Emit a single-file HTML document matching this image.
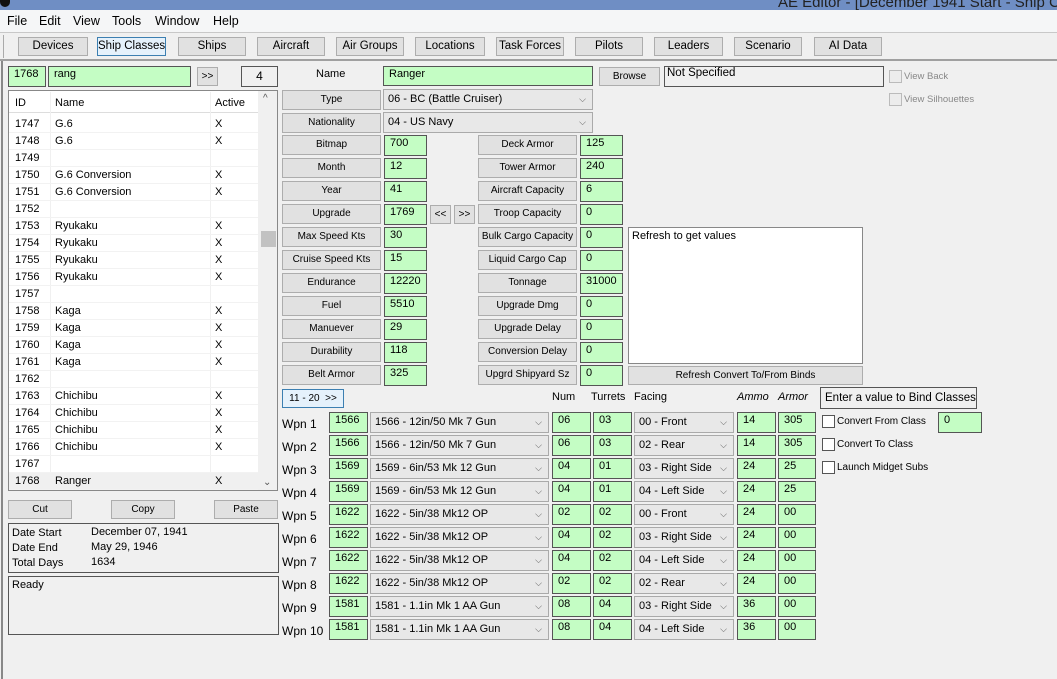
<!DOCTYPE html>
<html><head><meta charset="utf-8"><style>
*{box-sizing:border-box;margin:0;padding:0}
body{width:1057px;height:679px;overflow:hidden;background:#f0f0f0;font-family:"Liberation Sans",sans-serif;font-size:11px;color:#000;position:relative}
div{position:absolute;white-space:nowrap}
.b{background:#e1e1e1;border:1px solid #adadad;text-align:center;font-size:10px;line-height:18px;height:20px}
.tb{background:#e1e1e1;border:1px solid #adadad;text-align:center;font-size:11.5px;line-height:17px;height:19px;top:37px}
.g{background:#c4fdc4;border:1px solid #555;padding-left:5px;font-size:11px;line-height:14px;height:21px}
.s{background:#e8e8e8;border:1px solid #aaa;padding-left:4px;font-size:11px;line-height:19px;height:21px}
.s:after{content:"\2335";position:absolute;right:6px;top:0;font-size:9px;color:#555}
.r{height:17px;left:9px;width:249px;border-bottom:1px solid #f2f2f2;font-size:11px;line-height:17px}
.r span{position:absolute}
.w{left:282px;font-size:12px}
.cb{width:13px;height:13px;border:1px solid #555;background:#fff}
</style></head><body>
<div style="left:0;top:0;width:1057px;height:10px;background:#6f8ec4"></div>
<div style="left:0;top:0;width:10px;height:7px;background:#111;border-radius:0 0 6px 6px"></div>
<div style="left:778px;top:-6px;font-size:15px;color:#222">AE Editor - [December 1941 Start - Ship C</div>
<div style="left:0;top:10px;width:1057px;height:22px;background:#f5f6f7"></div>
<div style="left:7px;top:14px;font-size:12.5px">File</div>
<div style="left:39px;top:14px;font-size:12.5px">Edit</div>
<div style="left:73px;top:14px;font-size:12.5px">View</div>
<div style="left:112px;top:14px;font-size:12.5px">Tools</div>
<div style="left:155px;top:14px;font-size:12.5px">Window</div>
<div style="left:213px;top:14px;font-size:12.5px">Help</div>
<div style="left:0;top:32px;width:1057px;height:1px;background:#c8c8c8"></div>
<div style="left:3px;top:35px;width:1px;height:23px;background:#aaa"></div>
<div style="left:0;top:59px;width:1057px;height:2px;background:#a0a0a0"></div>
<div class="tb" style="left:18px;width:70px">Devices</div>
<div class="tb" style="left:97px;width:69px;border-color:#3c7fb1;background:#e5f1fb">Ship Classes</div>
<div class="tb" style="left:178px;width:68px">Ships</div>
<div class="tb" style="left:257px;width:68px">Aircraft</div>
<div class="tb" style="left:336px;width:68px">Air Groups</div>
<div class="tb" style="left:415px;width:70px">Locations</div>
<div class="tb" style="left:496px;width:68px">Task Forces</div>
<div class="tb" style="left:575px;width:68px">Pilots</div>
<div class="tb" style="left:654px;width:69px">Leaders</div>
<div class="tb" style="left:734px;width:68px">Scenario</div>
<div class="tb" style="left:814px;width:68px">AI Data</div>

<div style="left:1px;top:61px;width:2px;height:618px;background:#888"></div>
<div class="g" style="left:8px;top:66px;width:38px">1768</div>
<div class="g" style="left:48px;top:66px;width:143px">rang</div>
<div class="b" style="left:197px;top:67px;width:21px;height:19px">&gt;&gt;</div>
<div style="left:241px;top:66px;width:37px;height:21px;border:1px solid #555;text-align:center;line-height:19px;font-size:12px">4</div>
<div style="left:8px;top:90px;width:270px;height:401px;border:1px solid #888;background:#fff"></div>
<div style="left:9px;top:91px;width:249px;height:22px;background:#fff;border-bottom:1px solid #ddd"></div>
<div style="left:15px;top:97px;font-size:11px">ID</div>
<div style="left:55px;top:97px;font-size:11px">Name</div>
<div style="left:215px;top:97px;font-size:11px">Active</div>
<div style="left:50px;top:92px;width:1px;height:398px;background:#f0f0f0"></div>
<div style="left:210px;top:92px;width:1px;height:398px;background:#f0f0f0"></div>
<div style="left:258px;top:91px;width:19px;height:399px;background:#f0f0f0"></div>
<div style="left:263px;top:93px;font-size:10px;color:#555">&#94;</div>
<div style="left:263px;top:477px;font-size:10px;color:#555">&#8964;</div>
<div style="left:261px;top:231px;width:15px;height:16px;background:#c2c2c2"></div>
<div class="r" style="top:116px"><span style="left:6px">1747</span><span style="left:46px">G.6</span><span style="left:206px">X</span></div>
<div class="r" style="top:133px"><span style="left:6px">1748</span><span style="left:46px">G.6</span><span style="left:206px">X</span></div>
<div class="r" style="top:150px"><span style="left:6px">1749</span></div>
<div class="r" style="top:167px"><span style="left:6px">1750</span><span style="left:46px">G.6 Conversion</span><span style="left:206px">X</span></div>
<div class="r" style="top:184px"><span style="left:6px">1751</span><span style="left:46px">G.6 Conversion</span><span style="left:206px">X</span></div>
<div class="r" style="top:201px"><span style="left:6px">1752</span></div>
<div class="r" style="top:218px"><span style="left:6px">1753</span><span style="left:46px">Ryukaku</span><span style="left:206px">X</span></div>
<div class="r" style="top:235px"><span style="left:6px">1754</span><span style="left:46px">Ryukaku</span><span style="left:206px">X</span></div>
<div class="r" style="top:252px"><span style="left:6px">1755</span><span style="left:46px">Ryukaku</span><span style="left:206px">X</span></div>
<div class="r" style="top:269px"><span style="left:6px">1756</span><span style="left:46px">Ryukaku</span><span style="left:206px">X</span></div>
<div class="r" style="top:286px"><span style="left:6px">1757</span></div>
<div class="r" style="top:303px"><span style="left:6px">1758</span><span style="left:46px">Kaga</span><span style="left:206px">X</span></div>
<div class="r" style="top:320px"><span style="left:6px">1759</span><span style="left:46px">Kaga</span><span style="left:206px">X</span></div>
<div class="r" style="top:337px"><span style="left:6px">1760</span><span style="left:46px">Kaga</span><span style="left:206px">X</span></div>
<div class="r" style="top:354px"><span style="left:6px">1761</span><span style="left:46px">Kaga</span><span style="left:206px">X</span></div>
<div class="r" style="top:371px"><span style="left:6px">1762</span></div>
<div class="r" style="top:388px"><span style="left:6px">1763</span><span style="left:46px">Chichibu</span><span style="left:206px">X</span></div>
<div class="r" style="top:405px"><span style="left:6px">1764</span><span style="left:46px">Chichibu</span><span style="left:206px">X</span></div>
<div class="r" style="top:422px"><span style="left:6px">1765</span><span style="left:46px">Chichibu</span><span style="left:206px">X</span></div>
<div class="r" style="top:439px"><span style="left:6px">1766</span><span style="left:46px">Chichibu</span><span style="left:206px">X</span></div>
<div class="r" style="top:456px"><span style="left:6px">1767</span></div>
<div class="r" style="top:473px;background:#f0f0f0"><span style="left:6px">1768</span><span style="left:46px">Ranger</span><span style="left:206px">X</span></div>
<div class="b" style="left:8px;top:500px;width:64px;height:19px;line-height:17px">Cut</div>
<div class="b" style="left:111px;top:500px;width:64px;height:19px;line-height:17px">Copy</div>
<div class="b" style="left:214px;top:500px;width:64px;height:19px;line-height:17px">Paste</div>
<div style="left:8px;top:523px;width:271px;height:50px;border:1px solid #555;font-size:11px;line-height:15px;padding:2px 0 0 3px">Date Start<br>Date End<br>Total Days</div>
<div style="left:91px;top:525px;font-size:11px;line-height:15px">December 07, 1941<br>May 29, 1946<br>1634</div>
<div style="left:8px;top:576px;width:271px;height:59px;border:1px solid #555;font-size:11px;padding:2px 0 0 3px">Ready</div>

<div style="left:316px;top:68px;font-size:11px">Name</div>
<div class="g" style="left:383px;top:66px;width:210px;height:20px">Ranger</div>
<div class="b" style="left:599px;top:67px;width:61px;height:19px;line-height:17px">Browse</div>
<div style="left:664px;top:66px;width:220px;height:21px;border:1px solid #555;padding-left:2px;font-size:11.5px">Not Specified</div>
<div class="cb" style="left:889px;top:70px;background:#ececec;border-color:#bbb"></div>
<div style="left:904px;top:71px;font-size:9.5px;color:#888">View Back</div>
<div class="cb" style="left:889px;top:93px;background:#ececec;border-color:#bbb"></div>
<div style="left:904px;top:94px;font-size:9.5px;color:#888">View Silhouettes</div>

<div class="b" style="left:282px;top:90px;width:99px">Type</div>
<div class="s" style="left:383px;top:89px;width:210px">06 - BC (Battle Cruiser)</div>
<div class="b" style="left:282px;top:113px;width:99px">Nationality</div>
<div class="s" style="left:383px;top:112px;width:210px">04 - US Navy</div>

<div class="b" style="left:282px;top:135px;width:99px">Bitmap</div><div class="g" style="left:384px;top:135px;width:43px">700</div>
<div class="b" style="left:282px;top:158px;width:99px">Month</div><div class="g" style="left:384px;top:158px;width:43px">12</div>
<div class="b" style="left:282px;top:181px;width:99px">Year</div><div class="g" style="left:384px;top:181px;width:43px">41</div>
<div class="b" style="left:282px;top:204px;width:99px">Upgrade</div><div class="g" style="left:384px;top:204px;width:43px">1769</div>
<div class="b" style="left:430px;top:205px;width:21px;height:19px;line-height:17px">&lt;&lt;</div>
<div class="b" style="left:454px;top:205px;width:21px;height:19px;line-height:17px">&gt;&gt;</div>
<div class="b" style="left:282px;top:227px;width:99px">Max Speed Kts</div><div class="g" style="left:384px;top:227px;width:43px">30</div>
<div class="b" style="left:282px;top:250px;width:99px">Cruise Speed Kts</div><div class="g" style="left:384px;top:250px;width:43px">15</div>
<div class="b" style="left:282px;top:273px;width:99px">Endurance</div><div class="g" style="left:384px;top:273px;width:43px">12220</div>
<div class="b" style="left:282px;top:296px;width:99px">Fuel</div><div class="g" style="left:384px;top:296px;width:43px">5510</div>
<div class="b" style="left:282px;top:319px;width:99px">Manuever</div><div class="g" style="left:384px;top:319px;width:43px">29</div>
<div class="b" style="left:282px;top:342px;width:99px">Durability</div><div class="g" style="left:384px;top:342px;width:43px">118</div>
<div class="b" style="left:282px;top:365px;width:99px">Belt Armor</div><div class="g" style="left:384px;top:365px;width:43px">325</div>

<div class="b" style="left:478px;top:135px;width:99px">Deck Armor</div><div class="g" style="left:580px;top:135px;width:43px">125</div>
<div class="b" style="left:478px;top:158px;width:99px">Tower Armor</div><div class="g" style="left:580px;top:158px;width:43px">240</div>
<div class="b" style="left:478px;top:181px;width:99px">Aircraft Capacity</div><div class="g" style="left:580px;top:181px;width:43px">6</div>
<div class="b" style="left:478px;top:204px;width:99px">Troop Capacity</div><div class="g" style="left:580px;top:204px;width:43px">0</div>
<div class="b" style="left:478px;top:227px;width:99px">Bulk Cargo Capacity</div><div class="g" style="left:580px;top:227px;width:43px">0</div>
<div class="b" style="left:478px;top:250px;width:99px">Liquid Cargo Cap</div><div class="g" style="left:580px;top:250px;width:43px">0</div>
<div class="b" style="left:478px;top:273px;width:99px">Tonnage</div><div class="g" style="left:580px;top:273px;width:43px">31000</div>
<div class="b" style="left:478px;top:296px;width:99px">Upgrade Dmg</div><div class="g" style="left:580px;top:296px;width:43px">0</div>
<div class="b" style="left:478px;top:319px;width:99px">Upgrade Delay</div><div class="g" style="left:580px;top:319px;width:43px">0</div>
<div class="b" style="left:478px;top:342px;width:99px">Conversion Delay</div><div class="g" style="left:580px;top:342px;width:43px">0</div>
<div class="b" style="left:478px;top:365px;width:99px">Upgrd Shipyard Sz</div><div class="g" style="left:580px;top:365px;width:43px">0</div>

<div style="left:628px;top:227px;width:235px;height:137px;border:1px solid #888;background:#fff;padding:2px 3px;font-size:11px">Refresh to get values</div>
<div class="b" style="left:628px;top:366px;width:235px;height:19px;line-height:17px">Refresh Convert To/From Binds</div>

<div class="b" style="left:282px;top:389px;width:62px;height:19px;line-height:17px;border-color:#3c7fb1;background:#e5f1fb">11 - 20 &nbsp;&gt;&gt;</div>
<div style="left:552px;top:391px;font-size:11px">Num</div>
<div style="left:591px;top:391px;font-size:11px">Turrets</div>
<div style="left:634px;top:391px;font-size:11px">Facing</div>
<div style="left:737px;top:391px;font-size:11px;font-style:italic">Ammo</div>
<div style="left:778px;top:391px;font-size:11px;font-style:italic">Armor</div>
<div style="left:820px;top:387px;width:157px;height:22px;border:1px solid #555;font-size:11.5px;line-height:20px;padding-left:4px">Enter a value to Bind Classes</div>
<div class="cb" style="left:822px;top:415px"></div><div style="left:837px;top:416px;font-size:10px">Convert From Class</div>
<div class="g" style="left:938px;top:412px;width:44px">0</div>
<div class="cb" style="left:822px;top:438px"></div><div style="left:837px;top:439px;font-size:10px">Convert To Class</div>
<div class="cb" style="left:822px;top:461px"></div><div style="left:837px;top:462px;font-size:10px">Launch Midget Subs</div>

<div class="w" style="top:417px">Wpn 1</div><div class="g" style="left:329px;top:412px;width:39px">1566</div><div class="s" style="left:370px;top:412px;width:179px">1566 - 12in/50 Mk 7 Gun</div><div class="g" style="left:552px;top:412px;width:39px">06</div><div class="g" style="left:593px;top:412px;width:39px">03</div><div class="s" style="left:634px;top:412px;width:100px">00 - Front</div><div class="g" style="left:737px;top:412px;width:39px">14</div><div class="g" style="left:778px;top:412px;width:38px">305</div>
<div class="w" style="top:440px">Wpn 2</div><div class="g" style="left:329px;top:435px;width:39px">1566</div><div class="s" style="left:370px;top:435px;width:179px">1566 - 12in/50 Mk 7 Gun</div><div class="g" style="left:552px;top:435px;width:39px">06</div><div class="g" style="left:593px;top:435px;width:39px">03</div><div class="s" style="left:634px;top:435px;width:100px">02 - Rear</div><div class="g" style="left:737px;top:435px;width:39px">14</div><div class="g" style="left:778px;top:435px;width:38px">305</div>
<div class="w" style="top:463px">Wpn 3</div><div class="g" style="left:329px;top:458px;width:39px">1569</div><div class="s" style="left:370px;top:458px;width:179px">1569 - 6in/53 Mk 12 Gun</div><div class="g" style="left:552px;top:458px;width:39px">04</div><div class="g" style="left:593px;top:458px;width:39px">01</div><div class="s" style="left:634px;top:458px;width:100px">03 - Right Side</div><div class="g" style="left:737px;top:458px;width:39px">24</div><div class="g" style="left:778px;top:458px;width:38px">25</div>
<div class="w" style="top:486px">Wpn 4</div><div class="g" style="left:329px;top:481px;width:39px">1569</div><div class="s" style="left:370px;top:481px;width:179px">1569 - 6in/53 Mk 12 Gun</div><div class="g" style="left:552px;top:481px;width:39px">04</div><div class="g" style="left:593px;top:481px;width:39px">01</div><div class="s" style="left:634px;top:481px;width:100px">04 - Left Side</div><div class="g" style="left:737px;top:481px;width:39px">24</div><div class="g" style="left:778px;top:481px;width:38px">25</div>
<div class="w" style="top:509px">Wpn 5</div><div class="g" style="left:329px;top:504px;width:39px">1622</div><div class="s" style="left:370px;top:504px;width:179px">1622 - 5in/38 Mk12 OP</div><div class="g" style="left:552px;top:504px;width:39px">02</div><div class="g" style="left:593px;top:504px;width:39px">02</div><div class="s" style="left:634px;top:504px;width:100px">00 - Front</div><div class="g" style="left:737px;top:504px;width:39px">24</div><div class="g" style="left:778px;top:504px;width:38px">00</div>
<div class="w" style="top:532px">Wpn 6</div><div class="g" style="left:329px;top:527px;width:39px">1622</div><div class="s" style="left:370px;top:527px;width:179px">1622 - 5in/38 Mk12 OP</div><div class="g" style="left:552px;top:527px;width:39px">04</div><div class="g" style="left:593px;top:527px;width:39px">02</div><div class="s" style="left:634px;top:527px;width:100px">03 - Right Side</div><div class="g" style="left:737px;top:527px;width:39px">24</div><div class="g" style="left:778px;top:527px;width:38px">00</div>
<div class="w" style="top:555px">Wpn 7</div><div class="g" style="left:329px;top:550px;width:39px">1622</div><div class="s" style="left:370px;top:550px;width:179px">1622 - 5in/38 Mk12 OP</div><div class="g" style="left:552px;top:550px;width:39px">04</div><div class="g" style="left:593px;top:550px;width:39px">02</div><div class="s" style="left:634px;top:550px;width:100px">04 - Left Side</div><div class="g" style="left:737px;top:550px;width:39px">24</div><div class="g" style="left:778px;top:550px;width:38px">00</div>
<div class="w" style="top:578px">Wpn 8</div><div class="g" style="left:329px;top:573px;width:39px">1622</div><div class="s" style="left:370px;top:573px;width:179px">1622 - 5in/38 Mk12 OP</div><div class="g" style="left:552px;top:573px;width:39px">02</div><div class="g" style="left:593px;top:573px;width:39px">02</div><div class="s" style="left:634px;top:573px;width:100px">02 - Rear</div><div class="g" style="left:737px;top:573px;width:39px">24</div><div class="g" style="left:778px;top:573px;width:38px">00</div>
<div class="w" style="top:601px">Wpn 9</div><div class="g" style="left:329px;top:596px;width:39px">1581</div><div class="s" style="left:370px;top:596px;width:179px">1581 - 1.1in Mk 1 AA Gun</div><div class="g" style="left:552px;top:596px;width:39px">08</div><div class="g" style="left:593px;top:596px;width:39px">04</div><div class="s" style="left:634px;top:596px;width:100px">03 - Right Side</div><div class="g" style="left:737px;top:596px;width:39px">36</div><div class="g" style="left:778px;top:596px;width:38px">00</div>
<div class="w" style="top:624px">Wpn 10</div><div class="g" style="left:329px;top:619px;width:39px">1581</div><div class="s" style="left:370px;top:619px;width:179px">1581 - 1.1in Mk 1 AA Gun</div><div class="g" style="left:552px;top:619px;width:39px">08</div><div class="g" style="left:593px;top:619px;width:39px">04</div><div class="s" style="left:634px;top:619px;width:100px">04 - Left Side</div><div class="g" style="left:737px;top:619px;width:39px">36</div><div class="g" style="left:778px;top:619px;width:38px">00</div>
</body></html>
